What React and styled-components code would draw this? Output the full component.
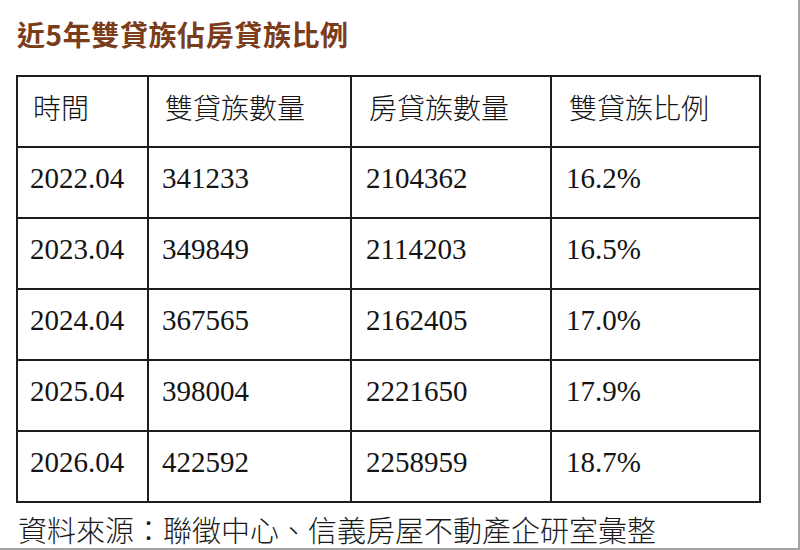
import React from 'react'
import styled, { createGlobalStyle } from 'styled-components'

const GlobalStyle = createGlobalStyle`
    html, body {
        margin: 0;
        padding: 0;
        background: #fff;
    }
`

const Frame = styled.div`
    box-sizing: border-box;
    width: 800px;
    height: 550px;
    padding: 20px 0 0 16px;
    background: #fff;
    border-right: 2px solid #a3a3a3;
    border-bottom: 2px solid #a3a3a3;
    display: flex;
    flex-direction: column;
`

const Title = styled.h2`
    margin: 0 0 26px 1px;
    font-family: "Noto Sans CJK TC", "Noto Sans", sans-serif;
    font-size: 28px;
    line-height: 29px;
    font-weight: 700;
    letter-spacing: 0.6px;
    color: #7a3c1a;
`

const Table = styled.table`
    border-collapse: collapse;
    width: 743px;
    table-layout: fixed;
    border: 2px solid #1e1e1e;
`

const Cell = styled.td`
    box-sizing: border-box;
    height: 71px;
    padding: 0 0 ${props => props.$head ? 10 : 8}px ${props => props.$pad || 13}px;
    border: 2px solid #1e1e1e;
    vertical-align: middle;
    text-align: left;
    color: #141414;
    font-family: ${props => props.$head
        ? '"Noto Sans CJK TC", "Noto Sans", sans-serif'
        : '"Liberation Serif", "DejaVu Serif", serif'};
    font-size: ${props => props.$head ? 28 : 29}px;
    font-weight: ${props => props.$head ? 300 : 400};
    white-space: nowrap;
`

const Source = styled.p`
    margin: 10px 0 0 2px;
    font-family: "Noto Sans CJK TC", "Noto Sans", sans-serif;
    font-size: 29px;
    line-height: 32px;
    font-weight: 300;
    color: #1a1a1a;
`

const widths = [131, 203, 200, 209]
const pads = [12, 13, 14, 14]

const headers = ['時間', '雙貸族數量', '房貸族數量', '雙貸族比例']

const rows = [
    ['2022.04', '341233', '2104362', '16.2%'],
    ['2023.04', '349849', '2114203', '16.5%'],
    ['2024.04', '367565', '2162405', '17.0%'],
    ['2025.04', '398004', '2221650', '17.9%'],
    ['2026.04', '422592', '2258959', '18.7%'],
]

function App() {
    return (
        <>
            <GlobalStyle />
            <Frame>
                <Title>近5年雙貸族佔房貸族比例</Title>
                <Table>
                    <colgroup>
                        {widths.map((w, i) => <col key={i} style={{ width: w }} />)}
                    </colgroup>
                    <thead>
                        <tr>
                            {headers.map((h, i) => <Cell as="th" $head $pad={pads[i] + 3} key={h}>{h}</Cell>)}
                        </tr>
                    </thead>
                    <tbody>
                        {rows.map(r => (
                            <tr key={r[0]}>
                                {r.map((v, i) => <Cell $pad={pads[i]} key={i}>{v}</Cell>)}
                            </tr>
                        ))}
                    </tbody>
                </Table>
                <Source>資料來源：聯徵中心、信義房屋不動產企研室彙整</Source>
            </Frame>
        </>
    )
}

export default App
